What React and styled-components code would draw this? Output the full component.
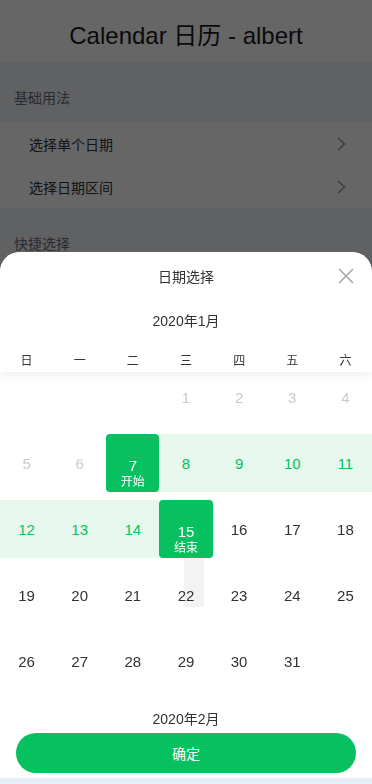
import React from "react";
import styled, { createGlobalStyle, css } from "styled-components";

const GREEN = "#07c160";

const GlobalStyle = createGlobalStyle`
  html, body {
    margin: 0;
    padding: 0;
  }
  body {
    width: 372px;
    height: 784px;
    overflow: hidden;
    background: #eef2f8;
    font-family: "Liberation Sans", "Noto Sans CJK SC", sans-serif;
    color: #323233;
  }
`;

const Page = styled.div`
  height: 784px;
  background: #eef2f8;
`;

const NavTitle = styled.h1`
  margin: 0;
  height: 62px;
  padding-top: 4px;
  box-sizing: border-box;
  display: flex;
  align-items: center;
  justify-content: center;
  background: #fff;
  font-size: 24px;
  font-weight: normal;
  color: #1a1a1a;
`;

const SectionTitle = styled.h2`
  margin: 0;
  padding: 26px 14px 14px;
  font-size: 14px;
  line-height: 20px;
  font-weight: normal;
  color: #6a6d7c;
`;

const CellGroup = styled.div`
  background: #fff;
`;

const Cell = styled.div`
  height: 43px;
  display: flex;
  align-items: center;
  justify-content: space-between;
  padding: 0 26px 0 29px;
  font-size: 14px;
  color: #323233;
`;

const Arrow = () => (
  <svg width="9" height="14" viewBox="0 0 9 14" fill="none">
    <polyline points="1,1 7.5,7 1,13" stroke="#969799" strokeWidth="1.5" />
  </svg>
);

const Overlay = styled.div`
  position: fixed;
  inset: 0;
  background: rgba(0, 0, 0, 0.6);
`;

const Popup = styled.div`
  position: fixed;
  left: 0;
  right: 0;
  bottom: 0;
  height: 532px;
  background: #fff;
  border-radius: 20px 20px 0 0;
  display: flex;
  flex-direction: column;
  overflow: hidden;
`;

const Header = styled.div`
  position: relative;
  z-index: 2;
  flex-shrink: 0;
  box-shadow: 0 2px 10px rgba(125, 126, 128, 0.16);
  background: #fff;
`;

const HeaderTitle = styled.div`
  height: 48px;
  display: flex;
  align-items: center;
  justify-content: center;
  font-size: 14px;
  color: #323233;
`;

const Close = styled.button`
  position: absolute;
  top: 15px;
  right: 17px;
  width: 18px;
  height: 18px;
  padding: 0;
  border: 0;
  background: none;
  display: flex;
  align-items: center;
  justify-content: center;
`;

const Subtitle = styled.div`
  height: 40px;
  display: flex;
  align-items: center;
  justify-content: center;
  font-size: 14px;
  color: #323233;
`;

const Weekdays = styled.div`
  display: grid;
  grid-template-columns: repeat(7, 1fr);
  padding-top: 10px;
  height: 22px;
`;

const Weekday = styled.span`
  text-align: center;
  font-size: 12px;
  line-height: 22px;
  color: #323233;
`;

const Body = styled.div`
  flex: 1;
  overflow: hidden;
`;

const Scroller = styled.div`
  margin-top: -7px;
`;

const MonthDays = styled.div`
  position: relative;
  display: grid;
  grid-template-columns: repeat(7, 1fr);
  grid-auto-rows: 66px;
`;

const MonthMark = styled.div`
  position: absolute;
  left: 184px;
  top: 135px;
  width: 20px;
  height: 107px;
  background: #f2f3f5;
  z-index: 0;
`;

const DayCell = styled.div`
  position: relative;
  z-index: 1;
  padding-top: 3px;
`;

const dayVariants = {
  disabled: css`
    color: #c8c9cc;
  `,
  normal: css`
    color: #323233;
  `,
  middle: css`
    color: ${GREEN};
    background: #e6f7ed;
  `,
  start: css`
    color: #fff;
    background: ${GREEN};
    border-radius: 4px;
  `,
  end: css`
    color: #fff;
    background: ${GREEN};
    border-radius: 4px;
  `,
};

const DayBox = styled.div`
  position: relative;
  height: 58px;
  display: flex;
  align-items: center;
  justify-content: center;
  font-size: 15px;
  ${(p) => dayVariants[p.$variant]}
`;

const DayNum = styled.span`
  position: relative;
  top: ${(p) => (p.$shift ? "2px" : "0")};
`;

const DayInfo = styled.span`
  position: absolute;
  left: 0;
  right: 0;
  bottom: 3px;
  text-align: center;
  font-size: 12px;
  line-height: 14px;
`;

const MonthTitle = styled.div`
  height: 48px;
  display: flex;
  align-items: center;
  justify-content: center;
  font-size: 14px;
  line-height: 14px;
  color: #323233;
`;

const Footer = styled.div`
  flex-shrink: 0;
  padding: 6px 16px 5px;
  background: #fff;
`;

const ConfirmButton = styled.button`
  width: 100%;
  height: 40px;
  border: 0;
  border-radius: 20px;
  background: ${GREEN};
  color: #fff;
  font-family: inherit;
  font-size: 14px;
`;

const SafeArea = styled.div`
  height: 6px;
  flex-shrink: 0;
  background: #e8eef8;
`;

const WEEK = ["日", "一", "二", "三", "四", "五", "六"];

const variantFor = (d) => {
  if (d < 7) return "disabled";
  if (d === 7) return "start";
  if (d === 15) return "end";
  if (d > 7 && d < 15) return "middle";
  return "normal";
};

const INFO = { 7: "开始", 15: "结束" };

const Day = ({ day }) => {
  const variant = variantFor(day);
  return (
    <DayCell>
      <DayBox $variant={variant}>
        <DayNum $shift={!!INFO[day]}>{day}</DayNum>
        {INFO[day] && <DayInfo>{INFO[day]}</DayInfo>}
      </DayBox>
    </DayCell>
  );
};

const App = () => {
  const blanks = [0, 1, 2];
  const days = Array.from({ length: 31 }, (_, i) => i + 1);
  return (
    <>
      <GlobalStyle />
      <Page>
        <NavTitle>Calendar 日历 - albert</NavTitle>
        <SectionTitle>基础用法</SectionTitle>
        <CellGroup>
          <Cell>
            <span>选择单个日期</span>
            <Arrow />
          </Cell>
          <Cell>
            <span>选择日期区间</span>
            <Arrow />
          </Cell>
        </CellGroup>
        <SectionTitle>快捷选择</SectionTitle>
      </Page>
      <Overlay />
      <Popup>
        <Header>
          <HeaderTitle>日期选择</HeaderTitle>
          <Close aria-label="close">
            <svg width="16" height="16" viewBox="0 0 16 16">
              <path d="M1 1L15 15M15 1L1 15" stroke="#a3a4a6" strokeWidth="1.5" />
            </svg>
          </Close>
          <Subtitle>2020年1月</Subtitle>
          <Weekdays>
            {WEEK.map((w) => (
              <Weekday key={w}>{w}</Weekday>
            ))}
          </Weekdays>
        </Header>
        <Body>
          <Scroller>
            <MonthDays>
              <MonthMark />
              {blanks.map((b) => (
                <DayCell key={"b" + b} />
              ))}
              {days.map((d) => (
                <Day key={d} day={d} />
              ))}
            </MonthDays>
            <MonthTitle>2020年2月</MonthTitle>
          </Scroller>
        </Body>
        <Footer>
          <ConfirmButton>确定</ConfirmButton>
        </Footer>
        <SafeArea />
      </Popup>
    </>
  );
};

export default App;
